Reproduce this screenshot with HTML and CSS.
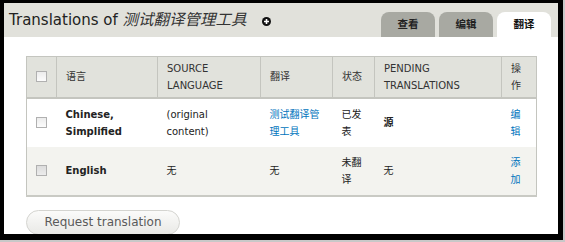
FILE: index.html
```html
<!DOCTYPE html>
<html lang="zh">
<head>
    <meta charset="UTF-8">
    <title>Translations of 测试翻译管理工具</title>
    <link rel="stylesheet" href="styles.css">
</head>
<body>
    <div class="frame">
        <header class="page-head">
            <h1 class="title">Translations of <em>测试翻译管理工具</em><svg class="add-icon" width="9" height="9" viewBox="0 0 9 9" aria-hidden="true">
                    <circle cx="4.5" cy="4.5" r="4.5" fill="#111"/>
                    <path d="M4.5 2v5M2 4.5h5" stroke="#fff" stroke-width="1.6"/>
                </svg></h1>
            <nav class="tabs">
                <a href="#" class="tab">查看</a>
                <a href="#" class="tab">编辑</a>
                <a href="#" class="tab active">翻译</a>
            </nav>
        </header>

        <main class="content">
            <table class="trans-table">
                <colgroup>
                    <col class="c-check">
                    <col class="c-lang">
                    <col class="c-source">
                    <col class="c-trans">
                    <col class="c-status">
                    <col class="c-pending">
                    <col class="c-ops">
                </colgroup>
                <thead>
                    <tr>
                        <th class="check-cell"><input type="checkbox" class="check"></th>
                        <th>语言</th>
                        <th>Source language</th>
                        <th>翻译</th>
                        <th>状态</th>
                        <th>Pending translations</th>
                        <th>操作</th>
                    </tr>
                </thead>
                <tbody>
                    <tr>
                        <td class="check-cell"><input type="checkbox" class="check"></td>
                        <td class="lang">Chinese, Simplified</td>
                        <td>(original content)</td>
                        <td><a href="#">测试翻译管理工具</a></td>
                        <td>已发表</td>
                        <td class="strong">源</td>
                        <td><a href="#">编辑</a></td>
                    </tr>
                    <tr class="alt">
                        <td class="check-cell"><input type="checkbox" class="check"></td>
                        <td class="lang">English</td>
                        <td>无</td>
                        <td>无</td>
                        <td>未翻译</td>
                        <td>无</td>
                        <td><a href="#">添加</a></td>
                    </tr>
                </tbody>
            </table>

            <button class="btn">Request translation</button>
        </main>
    </div>
</body>
</html>
```

FILE: styles.css
```css
* {
    margin: 0;
    padding: 0;
    box-sizing: border-box;
}

body {
    background: #c8c8c8;
    font-family: "DejaVu Sans", "Noto Sans CJK SC", sans-serif;
    color: #333;
}

a {
    color: #0074bd;
    text-decoration: none;
}

/* Window frame */
.frame {
    width: 563px;
    height: 240px;
    border-style: solid;
    border-color: #000;
    border-width: 3px 5px 6px 4px;
    background: #fff;
    overflow: hidden;
}

/* Header */
.page-head {
    height: 34px;
    background: #e1e1db;
    display: flex;
    justify-content: space-between;
    align-items: flex-end;
    padding: 0 7px 0 5px;
}

.title {
    align-self: stretch;
    font-size: 15px;
    font-weight: normal;
    line-height: 34px;
    color: #222;
    white-space: nowrap;
}

.title em {
    font-size: 15.5px;
    font-style: italic;
    color: #333;
}

.add-icon {
    margin-left: 15px;
    vertical-align: -1px;
}

.tabs {
    display: flex;
    gap: 4px;
}

.tab {
    width: 54px;
    height: 25px;
    line-height: 25px;
    text-align: center;
    font-size: 10.5px;
    font-weight: bold;
    color: #222;
    background: #a8a9a2;
    border-radius: 8px 8px 0 0;
}

.tab.active {
    background: #fff;
    color: #111;
}

/* Content */
.content {
    padding: 19px 22px 0;
}

.trans-table {
    width: 510px;
    table-layout: fixed;
    border-collapse: collapse;
    border: 1px solid #c4c5bf;
    border-bottom: 2px solid #c9cac4;
    font-size: 10px;
    line-height: 17px;
}

.c-check { width: 30px; }
.c-lang { width: 101px; }
.c-source { width: 103px; }
.c-trans { width: 72px; }
.c-status { width: 42px; }
.c-pending { width: 127px; }
.c-ops { width: 35px; }

.trans-table th {
    height: 41px;
    background: #e1e2dc;
    font-weight: normal;
    text-align: left;
    text-transform: uppercase;
    padding: 0 9px;
    border-left: 1px solid #c4c5bf;
    border-bottom: 2px solid #c4c5bf;
    color: #333;
}

.trans-table td {
    height: 49px;
    padding: 0 9px;
    vertical-align: middle;
    color: #222;
}

.trans-table tr.alt td {
    background: #f3f3ef;
}

.trans-table .check-cell {
    padding: 0;
    text-align: center;
}

.lang {
    font-weight: bold;
}

.strong {
    font-weight: bold;
}

.check {
    appearance: none;
    display: block;
    margin: 0 auto;
    width: 11px;
    height: 11px;
    border: 1px solid #b0b0b0;
    background: linear-gradient(#ececec, #fcfcfc);
}

tr.alt .check {
    background: linear-gradient(#dcdcdc, #ececec);
}

/* Button */
.btn {
    margin-top: 13px;
    width: 154px;
    height: 25px;
    border: 1px solid #d4d4d0;
    border-radius: 13px;
    background: linear-gradient(#fbfbfa, #e9e9e6);
    color: #5a5a5a;
    font-family: "DejaVu Sans", sans-serif;
    font-size: 12px;
}
```
